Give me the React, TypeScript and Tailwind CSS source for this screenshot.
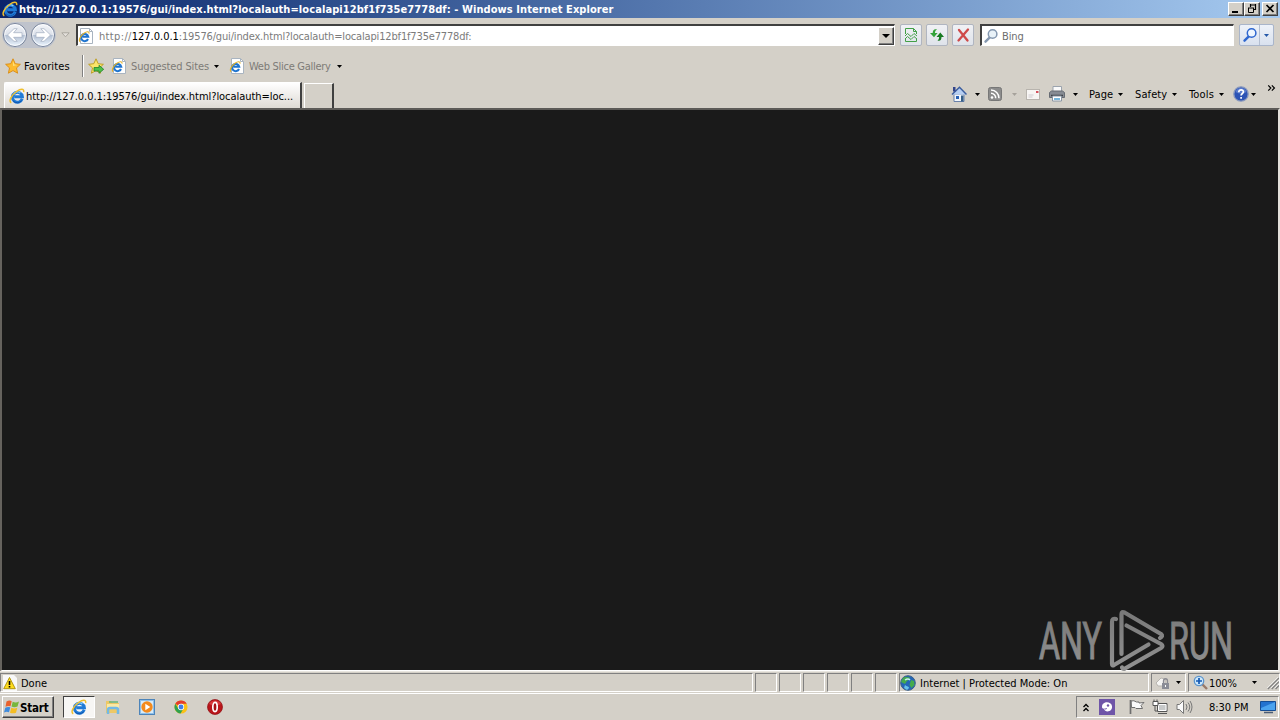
import type { ReactNode } from "react";

interface IconProps {
  className?: string;
}

function IELogo({ className = "h-4 w-4" }: IconProps) {
  return (
    <svg viewBox="0 0 16 16" className={`shrink-0 ${className}`} fill="none">
      <path
        d="M13.2 10.800A5 5 0 1 1 13.400 8.700H5.200"
        stroke="#1f7ad6"
        strokeWidth="2.900"
      />
      <path d="M4.800 6.600a4 4 0 0 1 6.500-1.700" stroke="#7fcdfa" strokeWidth="1.300" />
      <path d="M4 12.800a5.600 5.600 0 0 0 8.600-.2" stroke="#1257ae" strokeWidth="1" />
      <path
        d="M2.300 14.700C-.9 13.400 2.600 7 7.600 3.500c3.800-2.700 7.700-3.500 7.100.6"
        stroke="#efbf2e"
        strokeWidth="1.500"
      />
    </svg>
  );
}

function PageLogo() {
  return (
    <svg viewBox="0 0 16 16" className="h-4 w-4 shrink-0" fill="none">
      <path d="M2.500.5h9l3 3v12h-12z" fill="#fff" stroke="#a9b4c0" />
      <path d="M11.500.5v3h3" stroke="#a9b4c0" />
      <path d="M10 11a3.600 3.600 0 1 1 .2-2.200H4.400" stroke="#1f74cf" strokeWidth="2.100" />
      <path d="M2.200 13.500C0 12.600 2.400 7.600 6 5.200c2.800-1.900 5.400-2.100 5 .5" stroke="#e3b024" strokeWidth="1.100" />
    </svg>
  );
}

function Caret({ className = "text-black" }: IconProps) {
  return (
    <svg viewBox="0 0 5 3" className={`h-[3px] w-[5px] shrink-0 ${className}`}>
      <path d="M0 0h5L2.500 3z" fill="currentColor" />
    </svg>
  );
}

function NavArrow({ flip = false }: { flip?: boolean }) {
  return (
    <svg viewBox="0 0 26 26" className={`h-[26px] w-[26px] shrink-0 ${flip ? "-scale-x-100" : ""}`}>
      <defs>
        <linearGradient id="nav" x2="0" y2="1">
          <stop offset="0" stopColor="#f4f6fa" />
          <stop offset=".48" stopColor="#dce1ea" />
          <stop offset=".52" stopColor="#b3c0d3" />
          <stop offset="1" stopColor="#edf6ff" />
        </linearGradient>
      </defs>
      <circle cx="13" cy="13" r="11.500" fill="url(#nav)" stroke="#77839a" />
      <circle cx="13" cy="13" r="10.400" fill="none" stroke="#fff" strokeOpacity=".7" />
      <path
        d="M5.500 13l6.500-6.300h3.200L11.600 10.700H20v4.600h-8.400l3.600 4H12z"
        fill="#fff"
        stroke="#a2aec0"
        strokeWidth=".7"
      />
    </svg>
  );
}

const starPath = "M8 .8l2.200 4.900 5.200.6-3.900 3.600 1.100 5.300L8 12.600l-4.600 2.600 1.100-5.300L.6 6.300l5.200-.6z";

function Star({ arrow = false }: { arrow?: boolean }) {
  return (
    <svg viewBox="0 0 16 16" className="h-4 w-4 shrink-0">
      <path d={starPath} fill={arrow ? "#fbe56a" : "#fdbb30"} stroke={arrow ? "#b99a1c" : "#d98a12"} strokeWidth=".9" />
      {!arrow && <path d="M8 3l1.300 3.500 3 .5-4.300 1z" fill="#ffe07c" />}
      {arrow && (
        <path d="M6 9.500h5V7.300l4.700 4-4.700 4v-2.300H6z" fill="#4fc04a" stroke="#1f8127" strokeWidth=".8" />
      )}
    </svg>
  );
}

function Magnifier({ color, glass = "#eef6ff" }: { color: string; glass?: string }) {
  return (
    <svg viewBox="0 0 16 16" className="h-4 w-4 shrink-0">
      <path d="M6.800 9.300L2.500 13.700" stroke={color} strokeWidth="2.400" strokeLinecap="round" />
      <circle cx="9.600" cy="6" r="4.300" fill={glass} stroke={color} strokeWidth="1.500" />
    </svg>
  );
}

function ToolButton({ children }: { children: ReactNode }) {
  return (
    <div className="flex h-[22px] w-[22px] shrink-0 items-center justify-center rounded-[2px] border border-[#b0b5c0] bg-linear-to-b from-[#f0f1f4] to-[#dfe3ea]">
      {children}
    </div>
  );
}

function WindowButton({ children }: { children: ReactNode }) {
  return (
    <div className="h-[14px] w-4 shrink-0 border border-t-white border-r-[#404040] border-b-[#404040] border-l-white bg-[#d4d0c8] shadow-[inset_-1px_-1px_0_#808080]">
      <svg viewBox="0 0 14 12" className="h-3 w-[14px]" fill="none" stroke="#000">
        {children}
      </svg>
    </div>
  );
}

function TitleBar() {
  return (
    <div className="flex h-[18px] shrink-0 items-center bg-linear-to-r from-[#0a246a] to-[#a6caf0] pr-[2px] pl-[2px]">
      <IELogo className="h-4 w-4" />
      <span className="ml-px font-bold tracking-[0.08px] text-white">
        http://127.0.0.1:19576/gui/index.html?localauth=localapi12bf1f735e7778df: - Windows Internet Explorer
      </span>
      <div className="ml-auto flex">
        <WindowButton>
          <path d="M3 9h6" strokeWidth="2" />
        </WindowButton>
        <WindowButton>
          <path d="M5 2h6M5.500 1v3M10.500 1v5.500H9M3 5h6" strokeWidth="1.200" />
          <path d="M3.500 5v4.500h5V5" />
        </WindowButton>
        <div className="w-[2px]" />
        <WindowButton>
          <path d="M3.500 2l7 7M10.500 2l-7 7" strokeWidth="1.700" />
        </WindowButton>
      </div>
    </div>
  );
}

function AddressRow() {
  return (
    <div className="flex h-[34px] shrink-0 items-center pl-[2px]">
      <div className="flex w-[54px] shrink-0 gap-[2px] rounded-full bg-[#bfc3cc]">
        <NavArrow />
        <NavArrow flip />
      </div>
      <svg viewBox="0 0 9 6" className="ml-[5px] h-[6px] w-[9px] shrink-0">
        <path d="M.8.800h7.400L4.500 4.800z" fill="#e4e1dc" stroke="#aaa69f" />
      </svg>
      <div className="ml-[6px] flex h-[22px] w-[819px] shrink-0 items-center border-t-2 border-r border-b border-l-2 border-t-[#404040] border-r-white border-b-white border-l-[#404040] bg-white">
        <PageLogo />
        <span className="ml-[5px] tracking-[-0.16px] text-[#7b7b7b]">
          <span className="tracking-[0.35px]">http://</span>
          <span className="tracking-[-0.02px] text-black">127.0.0.1</span>
          :19576/gui/index.html?localauth=localapi12bf1f735e7778df:
        </span>
        <div className="ml-auto flex h-[18px] w-4 items-center justify-center border border-t-white border-r-[#404040] border-b-[#404040] border-l-white bg-[#d4d0c8] shadow-[inset_-1px_-1px_0_#808080]">
          <svg viewBox="0 0 8 4" className="h-1 w-2">
            <path d="M0 0h8L4 4z" />
          </svg>
        </div>
      </div>
      <div className="ml-[5px] flex gap-1">
        <ToolButton>
          <svg viewBox="0 0 16 16" className="h-4 w-4" fill="none" stroke="#43a047">
            <path d="M2.500 7V1.500h8l3 3V7M2.500 12v2.500h11V12M10.500 1.500v3h3" />
            <path d="M2 9l2.500-2.500L8 9.500l3-3L14 9M2 12l2.500-2.500L8 12.500l3-3 3 2.500" />
          </svg>
        </ToolButton>
        <ToolButton>
          <svg viewBox="0 0 16 16" className="h-4 w-4">
            <path d="M8 2.500C5.500 1.500 3.700 3 3.700 6H1l4 4.300L8.600 6H6c0-1.500.4-2.500 2-3.500z" fill="#33a33a" />
            <path d="M8.500 13.500c2.600 1 4-.5 4-3.500H15l-3.700-4.500L7.500 10h2.600c0 1.500-.3 2.500-1.600 3.500z" fill="#187a22" />
          </svg>
        </ToolButton>
        <ToolButton>
          <svg viewBox="0 0 16 16" className="h-4 w-4" stroke="#cf4a4a" strokeLinecap="round">
            <path d="M4 3l8.500 10.500M13 2.500L3.500 13.500" strokeWidth="2.300" />
          </svg>
        </ToolButton>
      </div>
      <div className="ml-[6px] flex h-[22px] w-[254px] shrink-0 items-center border-t-2 border-r border-b border-l-2 border-t-[#404040] border-r-white border-b-white border-l-[#404040] bg-white pl-px">
        <Magnifier color="#8598b0" glass="#e9f2f8" />
        <span className="ml-[3px] tracking-[-0.1px] text-[#6d6d6d]">Bing</span>
      </div>
      <div className="ml-[5px] flex h-[22px] w-[35px] shrink-0 items-center rounded-[2px] border border-[#a9b5ca] bg-linear-to-b from-[#eef2f9] to-[#d9e1ee]">
        <div className="flex h-full w-5 items-center justify-center border-r border-[#b4bfd2]">
          <Magnifier color="#2f67cf" />
        </div>
        <Caret className="ml-1 text-[#2457a8]" />
      </div>
    </div>
  );
}

function FavoritesRow() {
  return (
    <div className="flex h-[28px] shrink-0 items-center pl-[5px]">
      <Star />
      <span className="ml-[3px] w-[46px] tracking-[0.12px]">Favorites</span>
      <div className="ml-3 h-[22px] w-[2px] border-r border-l border-r-white border-l-[#808080]" />
      <div className="ml-1">
        <Star arrow />
      </div>
      <div className="ml-[7px]">
        <PageLogo />
      </div>
      <span className="ml-1 w-[78px] tracking-[-0.13px] text-[#7d7b77]">Suggested Sites</span>
      <Caret className="ml-[5px]" />
      <div className="ml-[10px]">
        <PageLogo />
      </div>
      <span className="ml-1 w-[82px] tracking-[-0.28px] text-[#7d7b77]">Web Slice Gallery</span>
      <Caret className="ml-[6px]" />
    </div>
  );
}

function CommandBar() {
  return (
    <div className="ml-auto flex h-[28px] items-center">
      <svg viewBox="0 0 16 16" className="h-4 w-4">
        <path d="M3 8h10v7.500H3z" fill="#f2f6fb" stroke="#6880aa" />
        <path d="M1 8.500L8.500 1.200 15.500 8.500" fill="#b7cff2" stroke="#3b5d9e" strokeWidth="1.500" />
        <path d="M2 1h2.500v4.500H2z" fill="#32448a" />
        <path d="M5 10h3v3H5z" fill="#2861b5" />
        <path d="M10 9.500h2.500v6H10z" fill="#345d86" />
      </svg>
      <Caret className="ml-2" />
      <svg viewBox="0 0 14 14" className="ml-2 h-[14px] w-[14px]" fill="none">
        <rect x=".5" y=".5" width="13" height="13" rx="2" fill="#8c8c8c" stroke="#777" />
        <circle cx="4" cy="10.500" r="1.300" fill="#fff" />
        <path d="M3 6.300a4.700 4.700 0 0 1 4.700 4.900M3 3a8 8 0 0 1 8 8.200" stroke="#fff" strokeWidth="1.500" />
      </svg>
      <Caret className="ml-[10px] text-[#a6a29b]" />
      <svg viewBox="0 0 14 11" className="ml-[9px] h-[11px] w-[14px]">
        <rect x=".5" y=".5" width="13" height="10" fill="#f7f5f3" stroke="#b8b4ae" />
        <path d="M10 2h2.500v2H10z" fill="#d4505c" />
        <path d="M2.500 6h5M2.500 8h4" stroke="#cfcbd0" />
      </svg>
      <svg viewBox="0 0 16 16" className="ml-[9px] h-4 w-4">
        <path d="M4 .5h8.500v6H4z" fill="#fafafa" stroke="#9ba3ad" />
        <path d="M.5 6.500l2-1.500h11l2 1.500v5H.5z" fill="#868b93" stroke="#666b73" />
        <path d="M2 9.500h12" stroke="#3f4348" strokeWidth="1.500" />
        <path d="M3.500 10h9v5h-9z" fill="#fff" stroke="#8894a2" />
        <path d="M5 12h6v2H5z" fill="#79b7dc" />
      </svg>
      <Caret className="ml-2" />
      <span className="ml-[11px] w-[25px] tracking-[0.1px]">Page</span>
      <Caret className="ml-1" />
      <span className="ml-3 w-[33px] tracking-[0.1px]">Safety</span>
      <Caret className="ml-1" />
      <span className="ml-3 w-[26px] tracking-[0.15px]">Tools</span>
      <Caret className="ml-1" />
      <svg viewBox="0 0 16 16" className="ml-[9px] h-4 w-4">
        <circle cx="8" cy="8" r="7.200" fill="#2c53b5" stroke="#8998bd" strokeWidth="1.300" />
        <path d="M2.500 6a5.800 5.800 0 0 1 11 0q-5.500 3-11 0z" fill="#7190d8" opacity=".7" />
        <path d="M5.800 6.300c0-3.400 4.800-3 4.600-.3-.1 1.500-2.300 1.500-2.300 3.500M8.100 11v1.700" fill="none" stroke="#fff" strokeWidth="1.700" />
      </svg>
      <Caret className="ml-[2px]" />
      <svg viewBox="0 0 9 7" className="mt-[-13px] mr-1 ml-[11px] h-[6px] w-[9px]" fill="none" stroke="#000" strokeWidth="1.400">
        <path d="M.7.500l3 3-3 3M4.900.500l3 3-3 3" />
      </svg>
    </div>
  );
}

function TabRow() {
  return (
    <div className="flex h-[28px] shrink-0 items-end">
      <div className="ml-1 flex h-[26px] w-[298px] items-center rounded-tl-[2px] border-t border-r-2 border-l border-t-white border-r-[#404040] border-l-white bg-linear-to-b from-white to-[#dedad4] pl-1">
        <IELogo />
        <span className="ml-px tracking-[-0.05px] whitespace-nowrap">
          http://127.0.0.1:19576/gui/index.html?localauth=loc...
        </span>
      </div>
      <div className="ml-[2px] h-[25px] w-[30px] border-t border-r-2 border-l border-t-white border-r-[#404040] border-l-white" />
      <CommandBar />
    </div>
  );
}

function Watermark() {
  return (
    <svg viewBox="0 0 200 64" className="absolute right-10 bottom-[-1px] h-16 w-[200px] overflow-visible" fill="none">
      <defs>
        <linearGradient id="mark" x1="0" y1="0" x2="0" y2="64" gradientUnits="userSpaceOnUse">
          <stop offset="0" stopColor="#777" />
          <stop offset="1" stopColor="#929292" />
        </linearGradient>
      </defs>
      <g fill="url(#mark)" stroke="url(#mark)" strokeWidth="1.100" className="font-[Roboto] text-[51px]">
        <text x="1" y="52" textLength="63" lengthAdjust="spacingAndGlyphs">ANY</text>
        <text x="131" y="52" textLength="64" lengthAdjust="spacingAndGlyphs">RUN</text>
      </g>
      <g stroke="url(#mark)" strokeWidth="4.200" strokeLinejoin="round" strokeLinecap="round">
        <path d="M78 12q-4-1-4 3v42q0 2 2 1l34.500-20.500" />
        <path d="M83.500 47V7q0-3 3-1.500L123 27q2.500 2-1 4" />
        <path d="M88.500 18.500L123 37q3 2 0 4L87 61.500q-2 1-3-1" />
      </g>
    </svg>
  );
}

function Pane({ className, children }: IconProps & { children?: ReactNode }) {
  return (
    <div
      className={`flex shrink-0 items-center border border-t-[#808080] border-r-white border-b-white border-l-[#808080] ${className}`}
    >
      {children}
    </div>
  );
}

function StatusBar() {
  return (
    <div className="flex h-[23px] shrink-0 items-center gap-[2px] border-t border-b border-t-[#e9e6e0] border-b-white">
      <Pane className="h-[19px] w-[753px] pl-[2px]">
        <svg viewBox="0 0 14 16" className="h-4 w-[14px]">
          <path d="M0 0h11l3 3v13H0z" fill="#f8f8f8" />
          <path d="M6.500 2.500l5.800 11.200H.700z" fill="#ffdc1c" stroke="#b09612" />
          <path d="M6.500 6v4M6.500 11v1.500" stroke="#000" strokeWidth="1.600" />
        </svg>
        <span className="ml-1">Done</span>
      </Pane>
      {[0, 1, 2, 3, 4, 5].map((i) => (
        <Pane key={i} className="h-[19px] w-[22px]" />
      ))}
      <Pane className="h-[19px] w-[250px]">
        <svg viewBox="0 0 16 16" className="h-4 w-4">
          <circle cx="8" cy="8" r="7.300" fill="#2467b6" stroke="#3d5f87" />
          <path d="M3 3c3-2 4 0 6-1l1 2-3 2-2 3-4-2zM11 5l3 1 .5 4-3 3-2-3z" fill="#45ab4c" />
          <path d="M5 10c2 2 4 1 4 3l-2 2-3-2z" fill="#67c1e8" />
          <path d="M5 5q3-2 5 0" stroke="#c7eef5" strokeWidth="1.500" fill="none" />
        </svg>
        <span className="ml-1 tracking-[0.02px] whitespace-nowrap">Internet | Protected Mode: On</span>
      </Pane>
      <Pane className="h-[19px] w-[35px] pl-[3px]">
        <svg viewBox="0 0 16 16" className="h-4 w-4">
          <path d="M1 8l5-5 4 1v7H3z" fill="#f5f4f2" stroke="#b7b5b0" />
          <path d="M8.500 8V6c0-3 4-3 4 0v2" fill="none" stroke="#8b8b92" strokeWidth="1.300" />
          <path d="M7 8h7v6H7z" fill="#8b8d96" />
          <path d="M10.500 10v2" stroke="#fff" />
        </svg>
        <Caret className="ml-[5px]" />
      </Pane>
      <Pane className="h-[19px] w-[92px] pl-1">
        <svg viewBox="0 0 16 16" className="h-4 w-4">
          <path d="M9 9l5 5" stroke="#9a7a68" strokeWidth="2.400" />
          <circle cx="6" cy="6" r="4.700" fill="#cce7fa" stroke="#5b94cc" strokeWidth="1.300" />
          <path d="M6 3v6M3 6h6" stroke="#1359b4" strokeWidth="1.700" />
        </svg>
        <span className="w-[29px] tracking-[-0.15px]">100%</span>
        <Caret className="ml-[14px]" />
        <svg viewBox="0 0 14 14" className="ml-[10px] h-[14px] w-[12px]">
          <path d="M1 14L14 1M5.500 14L14 5.500M10 14l4-4" stroke="#808080" strokeWidth="1.500" />
          <path d="M0 13L13 0M4.500 13L14 3.500M9 13l5-5" stroke="#fff" strokeWidth=".8" />
        </svg>
      </Pane>
    </div>
  );
}

function Taskbar() {
  return (
    <div className="flex h-[26px] shrink-0 items-center pl-[2px]">
      <div className="flex h-[22px] w-[52px] shrink-0 items-center border border-t-white border-r-[#404040] border-b-[#404040] border-l-white pl-px shadow-[inset_-1px_-1px_0_#808080]">
        <svg viewBox="0 0 16 16" className="h-4 w-4 shrink-0">
          <path d="M2.500 2.500q3-2 5.200-.300L6.500 7.300q-2.500-1-5 .5z" fill="#e9622d" />
          <path d="M8.700 2.700q3 1.500 6.300-.2l-1.500 5q-3 1.500-6 .1z" fill="#78b63d" />
          <path d="M1.300 8.700q2.500-1.300 5-.400L5 13.300q-2.500-1.300-5 .3z" fill="#3e8bdd" />
          <path d="M7.300 8.800q3 1.300 6 0L12 13.700q-3 1.300-6 0z" fill="#f4bd24" />
        </svg>
        <span className="text-[11.500px] font-bold tracking-[-0.2px]">Start</span>
      </div>
      <div className="ml-[9px] flex h-[22px] w-8 shrink-0 items-center justify-center border border-t-[#404040] border-r-white border-b-white border-l-[#404040] bg-[#f7f6f4]">
        <IELogo className="h-4 w-4" />
      </div>
      <svg viewBox="0 0 16 16" className="ml-[10px] h-4 w-4">
        <path d="M1 2h5l1 2h7v10H1z" fill="#edc866" />
        <path d="M2 5h12v5H2z" fill="#fae9a5" />
        <path d="M4 3h9" stroke="#67b579" strokeWidth="1.500" />
        <path d="M3 15v-4q0-2 2-2h6q2 0 2 2v4" fill="none" stroke="#72b9e6" strokeWidth="2.500" />
      </svg>
      <svg viewBox="0 0 16 16" className="ml-[18px] h-4 w-4">
        <rect x=".5" y=".5" width="15" height="15" fill="#8dc0eb" stroke="#4d84b9" />
        <rect x="2" y="2" width="12" height="12" fill="#d8ebf8" />
        <circle cx="8" cy="8" r="5.700" fill="#f38a1d" />
        <path d="M6.300 4.700l5 3.300-5 3.300z" fill="#fff" />
      </svg>
      <svg viewBox="0 0 16 16" className="ml-[18px] h-[14px] w-4">
        <circle cx="8" cy="8" r="7.500" fill="#fbc116" />
        <path d="M8 8L1.500 4.300A7.500 7.500 0 0 1 14.500 4.300H8z" fill="#e33b2e" />
        <path d="M1.500 4.300A7.500 7.500 0 0 0 7.500 15.500L11 9.500 4.800 9.800z" fill="#30a04f" />
        <circle cx="8" cy="8" r="3.600" fill="#fff" />
        <circle cx="8" cy="8" r="2.800" fill="#3f7de8" />
      </svg>
      <svg viewBox="0 0 16 16" className="ml-[18px] h-4 w-4">
        <circle cx="8" cy="8" r="7.500" fill="#b9161b" stroke="#8f0d11" strokeWidth=".7" />
        <path d="M2 5a7 7 0 0 1 12 0q-6 3-12 0z" fill="#df4244" opacity=".8" />
        <ellipse cx="8" cy="8" rx="2.200" ry="4.600" fill="#a61115" stroke="#fff" strokeWidth="1.700" />
      </svg>
      <Pane className="mr-px ml-auto h-[22px] w-[203px] pl-[6px]">
        <svg viewBox="0 0 6 9" className="h-[9px] w-[6px]" fill="none" stroke="#000" strokeWidth="1.300">
          <path d="M.5 4L3 1.500 5.500 4M.5 8L3 5.500 5.500 8" />
        </svg>
        <svg viewBox="0 0 16 16" className="ml-[10px] h-4 w-4">
          <path d="M0 0h16v16H0z" fill="#6f55a8" />
          <path d="M3 8c0-6 9-6 10-1 1 6-7 7-8 3 2 1 3 0 3-1-3 1-5 1-5-1z" fill="#fff" />
          <circle cx="9" cy="6.500" r="1.200" fill="#6f55a8" />
        </svg>
        <svg viewBox="0 0 17 16" className="ml-[13px] h-4 w-[17px]">
          <path d="M3 2q3-1 5.500 1H11v1l5-.5-3 3 1.500 3H8l-1-1H3.500z" fill="#fafafa" stroke="#6e6e6e" />
          <path d="M2.500 1v14" stroke="#6e6e6e" strokeWidth="1.700" />
        </svg>
        <svg viewBox="0 0 16 16" className="ml-[7px] h-4 w-4">
          <path d="M5.500 4.500h9.500v8H5.500z" fill="#c7c9c9" stroke="#555" />
          <path d="M6.500 5.500h7.500v6H6.500z" fill="none" stroke="#fff" />
          <path d="M6 14.500h9M3 7v5h2" stroke="#555" fill="none" />
          <path d="M1 2.500h5v4H1zM2 .5v2M5 .5v2" fill="#fff" stroke="#555" />
        </svg>
        <svg viewBox="0 0 17 16" className="ml-2 h-4 w-[17px]" fill="none" stroke="#777">
          <path d="M1 5.500h2.500l4-4v13l-4-4H1z" fill="#fafafa" />
          <path d="M10 5q2 3 0 6M12 3.500q3.500 4.500 0 9M14 2q4 6 0 12" />
        </svg>
        <span className="ml-4 w-[40px] tracking-[-0.05px] whitespace-nowrap">8:30 PM</span>
        <svg viewBox="0 0 16 14" className="ml-[11px] h-[14px] w-4">
          <path d="M.5 1.500h15v9H.5z" fill="#2372cf" stroke="#164d93" />
          <path d="M1 8L15 2v8H1z" fill="#4ba3ee" />
          <path d="M4 12.500h9" stroke="#4b5c75" strokeWidth="1.500" />
        </svg>
      </Pane>
    </div>
  );
}

export default function App() {
  return (
    <div className="flex h-[720px] w-[1280px] flex-col overflow-hidden bg-[#d4d0c8] font-['DejaVu_Sans_Condensed','DejaVu_Sans',sans-serif] text-[11px] leading-[14px] whitespace-nowrap text-black [&_span]:pt-[2px]">
      <TitleBar />
      <AddressRow />
      <FavoritesRow />
      <TabRow />
      <main className="relative min-h-0 flex-1 border-t-2 border-r-2 border-b border-l-2 border-t-[#5c5a57] border-r-[#e4e1dc] border-b-white border-l-[#66635e] bg-[#1a1a1a]">
        <Watermark />
      </main>
      <StatusBar />
      <Taskbar />
    </div>
  );
}
